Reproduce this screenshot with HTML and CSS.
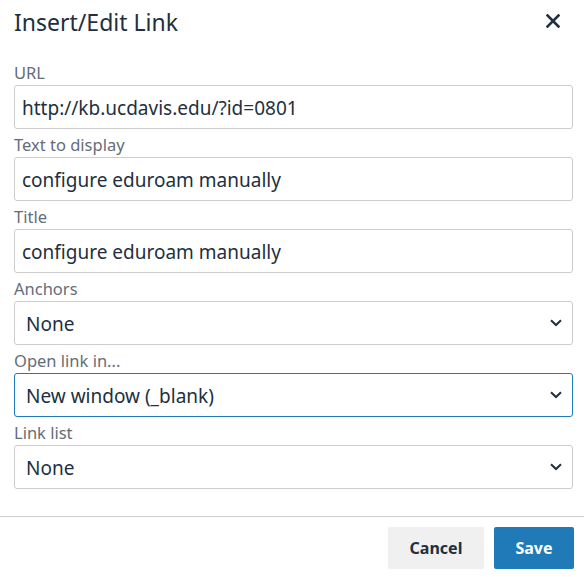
FILE: index.html
```html
<!DOCTYPE html>
<html lang="en">
<head>
<meta charset="utf-8">
<title>Insert/Edit Link</title>
<link rel="stylesheet" href="styles.css">
</head>
<body>
<div class="dialog">
  <div class="header">
    <div class="title">Insert/Edit Link</div>
    <button class="close" aria-label="Close">
      <svg width="14" height="14" viewBox="0 0 14 14"><path d="M1.5 1.5 L12.5 12.5 M12.5 1.5 L1.5 12.5" stroke="#222f3e" stroke-width="2.6" stroke-linecap="square" fill="none"/></svg>
    </button>
  </div>
  <div class="body">
    <div class="field">
      <label class="label">URL</label>
      <div class="input">http://kb.ucdavis.edu/?id=0801</div>
    </div>
    <div class="field">
      <label class="label">Text to display</label>
      <div class="input">configure eduroam manually</div>
    </div>
    <div class="field">
      <label class="label">Title</label>
      <div class="input">configure eduroam manually</div>
    </div>
    <div class="field">
      <label class="label">Anchors</label>
      <div class="input select"><span>None</span><svg class="chev" width="12" height="8" viewBox="0 0 12 8"><path d="M1 1.2 L6 6 L11 1.2" stroke="#222f3e" stroke-width="2" fill="none"/></svg></div>
    </div>
    <div class="field">
      <label class="label">Open link in...</label>
      <div class="input select focused"><span>New window (_blank)</span><svg class="chev" width="12" height="8" viewBox="0 0 12 8"><path d="M1 1.2 L6 6 L11 1.2" stroke="#222f3e" stroke-width="2" fill="none"/></svg></div>
    </div>
    <div class="field">
      <label class="label">Link list</label>
      <div class="input select"><span>None</span><svg class="chev" width="12" height="8" viewBox="0 0 12 8"><path d="M1 1.2 L6 6 L11 1.2" stroke="#222f3e" stroke-width="2" fill="none"/></svg></div>
    </div>
  </div>
  <div class="footer">
    <button class="btn secondary">Cancel</button>
    <button class="btn primary">Save</button>
  </div>
</div>
</body>
</html>
```
FILE: styles.css
```css
html, body {
  margin: 0;
  padding: 0;
  background: #fff;
}
body {
  font-family: "Noto Sans", "Open Sans", sans-serif;
  color: #222f3e;
}
.dialog {
  width: 584px;
}
.header {
  height: 44px;
  display: flex;
  align-items: center;
  justify-content: space-between;
  padding: 0 24px 0 14px;
}
.title {
  font-size: 23px;
  line-height: 30px;
}
.close {
  border: 0;
  background: none;
  padding: 0;
  width: 14px;
  height: 14px;
  display: flex;
  margin-top: -2px;
}
.body {
  padding: 13px 11px 27px 14px;
  display: flex;
  flex-direction: column;
}
.field {
  display: flex;
  flex-direction: column;
}
.label {
  box-sizing: border-box;
  font-size: 16.5px;
  line-height: 24px;
  height: 28px;
  padding-top: 4px;
  color: #646d78;
}
.input {
  box-sizing: border-box;
  height: 44px;
  border: 1px solid #cccccc;
  border-radius: 3px;
  padding: 2px 7px 0;
  font-size: 19px;
  display: flex;
  align-items: center;
  white-space: nowrap;
}
.select {
  padding: 2px 10px 0 11px;
  justify-content: space-between;
}
.focused {
  border-color: #207ab7;
}
.chev {
  display: block;
  margin-top: -2px;
}
.footer {
  border-top: 1px solid #cccccc;
  display: flex;
  justify-content: flex-end;
  gap: 10px;
  padding: 10px 10px 8px;
}
.btn {
  height: 42px;
  border: 0;
  border-radius: 2px;
  font-family: "Noto Sans", "Open Sans", sans-serif;
  font-weight: 700;
  font-size: 16px;
  padding: 0;
}
.secondary {
  width: 96px;
  background: #f0f0f0;
  color: #222f3e;
}
.primary {
  width: 80px;
  background: #207ab7;
  color: #fff;
}
```
